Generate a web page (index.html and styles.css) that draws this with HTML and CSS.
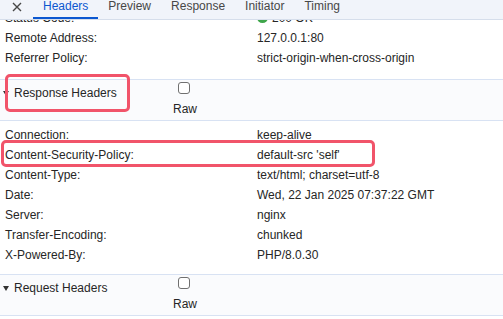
FILE: index.html
```html
<!DOCTYPE html>
<html>
<head>
<meta charset="utf-8">
<link rel="stylesheet" href="styles.css">
</head>
<body>
<div class="tabs">
  <div class="close">
    <svg width="10" height="10" viewBox="0 0 10 10"><path d="M1 1L9 9M9 1L1 9" stroke="#474747" stroke-width="1.4" fill="none"/></svg>
  </div>
  <div class="tab active">Headers</div>
  <div class="tab">Preview</div>
  <div class="tab">Response</div>
  <div class="tab">Initiator</div>
  <div class="tab">Timing</div>
</div>
<div class="pane">
  <div class="content">
    <div class="rows general">
      <div class="row"><span class="k">Status Code:</span><span class="v"><span class="dot"></span>200 OK</span></div>
      <div class="row"><span class="k">Remote Address:</span><span class="v">127.0.0.1:80</span></div>
      <div class="row"><span class="k">Referrer Policy:</span><span class="v">strict-origin-when-cross-origin</span></div>
    </div>
    <div class="sec-head">
      <div class="sec-title"><span class="tri"></span>Response Headers</div>
      <div class="raw"><input type="checkbox" class="cb"><span class="raw-label">Raw</span></div>
      <div class="hl hl-title"></div>
    </div>
    <div class="rows resp">
      <div class="row"><span class="k">Connection:</span><span class="v">keep-alive</span></div>
      <div class="row marked"><span class="k">Content-Security-Policy:</span><span class="v">default-src 'self'</span><div class="hl hl-row"></div></div>
      <div class="row"><span class="k">Content-Type:</span><span class="v">text/html; charset=utf-8</span></div>
      <div class="row"><span class="k">Date:</span><span class="v">Wed, 22 Jan 2025 07:37:22 GMT</span></div>
      <div class="row"><span class="k">Server:</span><span class="v">nginx</span></div>
      <div class="row"><span class="k">Transfer-Encoding:</span><span class="v">chunked</span></div>
      <div class="row"><span class="k">X-Powered-By:</span><span class="v">PHP/8.0.30</span></div>
    </div>
    <div class="sec-head">
      <div class="sec-title"><span class="tri"></span>Request Headers</div>
      <div class="raw"><input type="checkbox" class="cb"><span class="raw-label">Raw</span></div>
    </div>
  </div>
</div>
</body>
</html>
```
FILE: styles.css
```css
* { box-sizing: border-box; }
html, body { margin: 0; padding: 0; }
body {
  width: 503px;
  height: 319px;
  overflow: hidden;
  background: #ffffff;
  font-family: "Liberation Sans", Arial, sans-serif;
  font-size: 12px;
  color: #262626;
}
.tabs {
  display: flex;
  height: 20px;
  background: #f1f4fa;
  border-bottom: 1px solid #d6deeb;
}
.close {
  width: 33px;
  display: flex;
  justify-content: center;
  padding-top: 2px;
  padding-left: 1px;
}
.tab {
  padding: 0 10px;
  line-height: 12px;
  height: 19px;
  color: #474747;
}
.tab.active {
  color: #0b57d0;
  border-bottom: 2px solid #0b57d0;
}
.pane {
  height: 299px;
  overflow: hidden;
}
.content {
  margin-top: -12px;
}
.rows.general { padding-bottom: 11px; }
.rows.resp { padding-top: 4px; padding-bottom: 9px; }
.row {
  display: grid;
  grid-template-columns: 252px 1fr;
  padding-left: 5px;
  line-height: 20px;
  height: 20px;
  white-space: nowrap;
}
.row.marked { position: relative; }
.dot {
  display: inline-block;
  width: 11px;
  height: 11px;
  border-radius: 50%;
  background: #3ea54a;
  vertical-align: -1px;
  margin-right: 4px;
}
.sec-head {
  position: relative;
  display: flex;
  height: 42px;
  border-top: 1px solid #d8e2f3;
  border-bottom: 1px solid #d8e2f3;
  background: #fafbfd;
}
.sec-title {
  flex: 0 0 170px;
  display: flex;
  align-items: center;
  height: 20px;
  margin-top: 3px;
  padding-left: 3px;
  line-height: 20px;
}
.tri {
  width: 0;
  height: 0;
  border-left: 3px solid transparent;
  border-right: 3px solid transparent;
  border-top: 5px solid #333;
  margin-right: 5px;
  margin-top: 1px;
}
.raw {
  width: 30px;
  display: flex;
  flex-direction: column;
  align-items: center;
}
.cb {
  appearance: none;
  -webkit-appearance: none;
  width: 12px;
  height: 12px;
  margin: 2px 0 0 -2px;
  border: 1px solid #707070;
  border-radius: 3px;
  background: #fff;
}
.raw-label {
  margin-top: 5px;
  line-height: 20px;
}
.hl {
  position: absolute;
  border: 3px solid #f1546a;
  border-radius: 5px;
  pointer-events: none;
}
.hl-title {
  left: 5px;
  top: -6px;
  width: 125px;
  height: 38px;
}
.hl-row {
  left: 1px;
  top: -5px;
  width: 374px;
  height: 27px;
}
```
